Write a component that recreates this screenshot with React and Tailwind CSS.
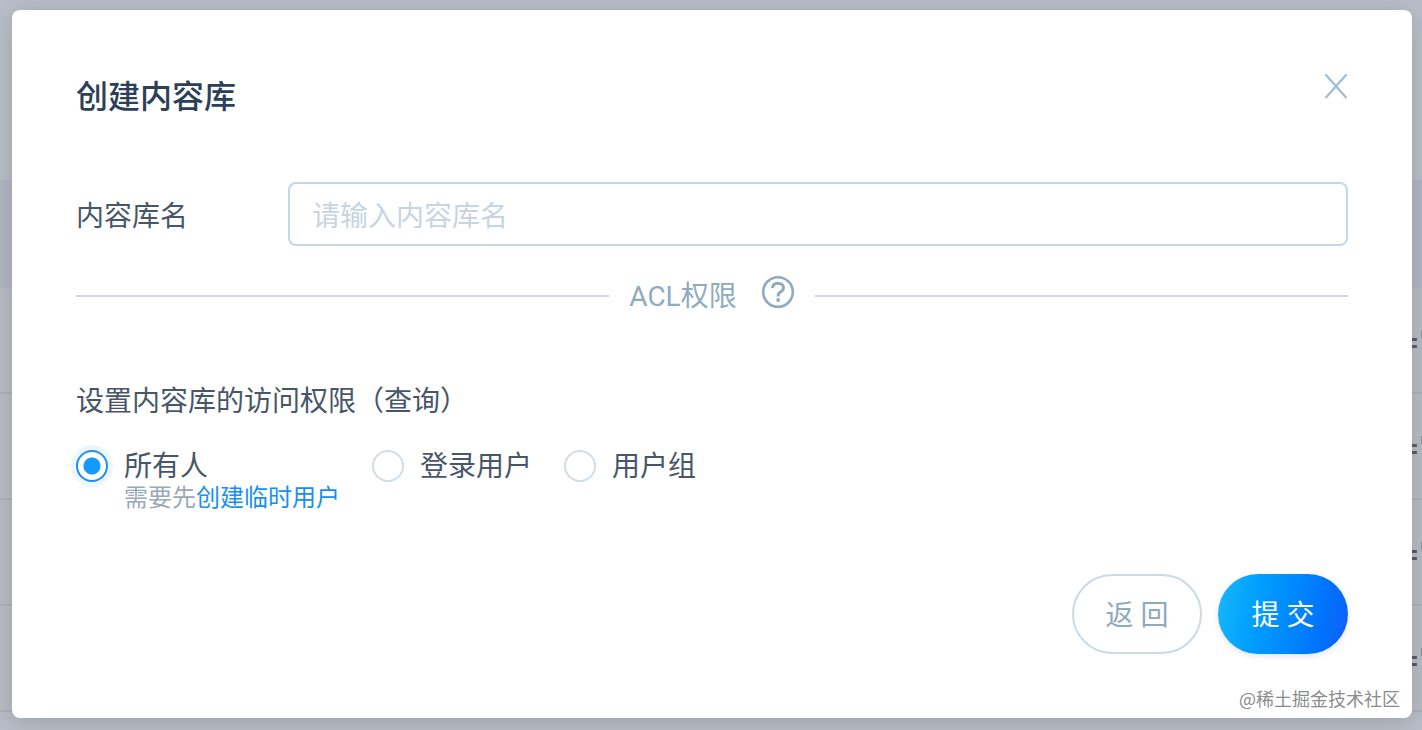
import React, { useState } from 'react';

const ROWS = [1, 2, 3, 4];

const ACCESS_OPTIONS = [
  { value: 'everyone', label: '所有人' },
  { value: 'user', label: '登录用户' },
  { value: 'group', label: '用户组' },
];

// Dimmed table page that stays visible around the dialog
const Backdrop = () => (
  <div className="absolute inset-0 flex flex-col overflow-hidden bg-[#b8bec7]" aria-hidden="true">
    <div className="h-[180px] shrink-0" />
    <div className="h-[108px] shrink-0 bg-[#b1b6c3]" />
    {ROWS.map((row) => (
      <div
        key={row}
        className="flex h-[106px] shrink-0 items-center justify-end border-b-2 border-[#adb2ba] bg-[#b7bcc4]"
      >
        <span className="pt-1 pr-[2px] font-[Roboto,sans-serif] text-[32px] leading-8 font-medium text-[#5a5d66]">
          =
        </span>
        <span className="mb-3 h-2 w-px bg-[#8e929a]" />
      </div>
    ))}
  </div>
);

const CloseIcon = () => (
  <svg width="24" height="26" viewBox="0 0 24 26" fill="none">
    <defs>
      <linearGradient id="close-stroke" gradientUnits="userSpaceOnUse" x1="0" y1="0" x2="0" y2="26">
        <stop offset="0" stopColor="#97c2e8" />
        <stop offset="1" stopColor="#b2bcc6" />
      </linearGradient>
    </defs>
    <path d="M1.5 0.5L22.5 24M22.5 0.5L1.5 24" stroke="url(#close-stroke)" strokeWidth="2.4" />
  </svg>
);

const HelpIcon = () => (
  <svg width="34" height="34" viewBox="0 0 34 34" fill="none" stroke="#8fabc1">
    <circle cx="17" cy="17" r="14.8" strokeWidth="2.6" />
    <path
      d="M11.4 13.2C11.6 10.1 13.8 8.2 17 8.2C20.2 8.2 22.5 10.1 22.5 12.8C22.5 14.8 21.3 15.9 19.6 16.9C17.7 18 17.2 18.8 17.2 20.4V21.4"
      strokeWidth="3"
    />
    <circle cx="17.2" cy="25" r="1.9" fill="#8fabc1" stroke="none" />
  </svg>
);

const App = () => {
  const [name, setName] = useState('');
  const [access, setAccess] = useState('everyone');

  return (
    <div className="relative min-h-screen overflow-hidden pt-[10px] pr-[10px] pb-3 pl-3 font-['Noto_Sans_CJK_SC',sans-serif]">
      <Backdrop />

      <form
        role="dialog"
        aria-labelledby="dialog-title"
        onSubmit={(e) => e.preventDefault()}
        className="relative rounded-lg bg-white p-16 text-[28px] text-[#475669] shadow-[0_4px_24px_rgba(0,0,0,0.15)]"
      >
        <div className="flex items-start justify-between">
          <h1 id="dialog-title" className="text-[32px] leading-10 font-medium text-[#2c4058]">
            创建内容库
          </h1>
          <button type="button" aria-label="关闭" className="cursor-pointer">
            <CloseIcon />
          </button>
        </div>

        <div className="mt-[68px] flex items-center">
          <label htmlFor="library-name" className="w-[212px] shrink-0 leading-10">
            内容库名
          </label>
          <input
            id="library-name"
            type="text"
            value={name}
            onChange={(e) => setName(e.target.value)}
            placeholder="请输入内容库名"
            className="h-16 min-w-0 flex-1 rounded-lg border-2 border-[#c5d7e6] px-[22px] outline-none placeholder:text-[#c8d5e0]"
          />
        </div>

        {/* ACL divider */}
        <div className="mt-7 flex items-center gap-5 text-[#8fabc1]">
          <div className="h-[2px] flex-1 bg-[#c8d7e3]" />
          <div className="flex items-center gap-6 leading-10">
            <span>
              <span className="font-[Roboto,sans-serif]">ACL</span>权限
            </span>
            <button type="button" aria-label="帮助" className="mb-2 cursor-pointer">
              <HelpIcon />
            </button>
          </div>
          <div className="h-[2px] flex-1 bg-[#c8d7e3]" />
        </div>

        <fieldset className="mt-[62px]">
          <legend className="leading-10">设置内容库的访问权限（查询）</legend>
          <div className="mt-[29px] flex items-start gap-8">
            {ACCESS_OPTIONS.map((option) => (
              <div key={option.value} className="flex items-start gap-4">
                <input
                  id={option.value}
                  type="radio"
                  name="access"
                  checked={access === option.value}
                  onChange={() => setAccess(option.value)}
                  className="mt-[2px] size-8 shrink-0 appearance-none rounded-full border-2 border-[#d0dce6] bg-white checked:border-[#1890f8] checked:bg-[radial-gradient(circle,#1499ff_8px,#ffffff_9px)] checked:shadow-[0_0_0_5px_#edf6fc]"
                />
                <div>
                  <label htmlFor={option.value} className="block leading-8">
                    {option.label}
                  </label>
                  {option.value === 'everyone' && (
                    <p className="text-2xl leading-8 text-[#99a9b8]">
                      需要先
                      <a href="#temp-user" className="text-[#1790f0]">
                        创建临时用户
                      </a>
                    </p>
                  )}
                </div>
              </div>
            ))}
          </div>
        </fieldset>

        <div className="mt-[62px] flex justify-end gap-4 font-[Roboto,'Noto_Sans_CJK_SC',sans-serif]">
          <button
            type="button"
            className="h-20 w-[130px] cursor-pointer rounded-full border-2 border-[#cbdae6] pt-1 text-[#8fa9bd]"
          >
            返 回
          </button>
          <button
            type="submit"
            className="h-20 w-[130px] cursor-pointer rounded-full bg-linear-100 from-[#18b8fc] to-[#105cfc] pt-1 text-white shadow-[0_2px_6px_rgba(20,60,120,0.15)]"
          >
            提 交
          </button>
        </div>

        <span className="absolute right-3 bottom-2 text-lg leading-6 text-[#8c8c8c] [text-shadow:-1px_-1px_0_#fff]">
          @稀土掘金技术社区
        </span>
      </form>
    </div>
  );
};

export default App;
